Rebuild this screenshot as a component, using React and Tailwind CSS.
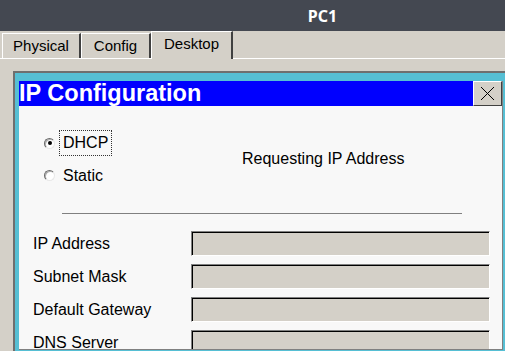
import React from "react";

function Radio({ checked }) {
  return (
    <div className="w-[11px] h-[11px] rounded-full border border-t-[#6a6a6a] border-l-[#6a6a6a] border-b-[#e8e8e8] border-r-[#e8e8e8] bg-white shadow-[inset_1px_1px_0_#b0b0b0] flex items-center justify-center">
      {checked && <div className="w-[4px] h-[4px] rounded-full bg-black" />}
    </div>
  );
}

function Field({ label }) {
  return (
    <div className="flex items-center h-[25px]">
      <div className="w-[172px] pl-[14px] text-[16px] text-black leading-none">{label}</div>
      <div className="w-[299px] h-[25px] border-t border-l border-t-[#808080] border-l-[#808080] border-b border-r border-b-white border-r-white">
        <div className="w-full h-full border-t border-l border-black bg-[#d4d0c8]" />
      </div>
    </div>
  );
}

export default function App() {
  return (
    <div
      className="w-[505px] h-[351px] overflow-hidden bg-[#d4d0c8] flex flex-col"
      style={{ fontFamily: '"Liberation Sans", Arial, sans-serif' }}
    >
      <div
        className="h-[31px] shrink-0 bg-[#444851] flex items-center justify-center pl-[140px] text-white font-bold text-[16px]"
        style={{ fontFamily: '"Noto Sans", sans-serif' }}
      >
        PC1
      </div>
      <div className="h-[27px] shrink-0 flex items-end pl-[2px] relative z-10">
        <div className="w-[79px] h-[25px] border-t border-l border-white border-r-2 border-r-[#404040] flex items-center justify-center text-[15px] text-black">
          Physical
        </div>
        <div className="w-[70px] h-[25px] border-t border-l border-white border-r-2 border-r-[#404040] flex items-center justify-center text-[15px] text-black">
          Config
        </div>
        <div className="w-[82px] h-[28px] -mb-px bg-[#d4d0c8] border-t border-l border-white border-r-2 border-r-[#404040] flex items-center justify-center pb-[3px] text-[15px] text-black">
          Desktop
        </div>
      </div>
      <div className="flex-1 min-h-0 border-t border-white pl-[13px] pt-[12px] flex flex-col">
        <div className="flex-1 min-h-0 border-t-2 border-l-2 border-[#6f6f6f] bg-[#56bfd4] pl-[4px] pt-[8px] pr-[2px] pb-[1px] flex flex-col">
          <div className="flex-1 min-h-0 bg-[#f8f8f8] border-r border-b border-[#808080] overflow-hidden flex flex-col">
            <div className="h-[25px] shrink-0 bg-[#0000ff] flex items-center justify-between">
              <div className="text-white text-[23.5px] font-bold leading-none">
                IP Configuration
              </div>
              <div className="w-[29px] h-[25px] bg-[#d4d0c8] border-t border-l border-white border-r border-b border-r-[#404040] border-b-[#404040] flex items-center justify-center">
                <svg width="15" height="15" viewBox="0 0 15 15">
                  <path d="M1 1 L14 14 M14 1 L1 14" stroke="#000" strokeWidth="1" fill="none" />
                </svg>
              </div>
            </div>
            <div className="flex pt-[24px] h-[82px] shrink-0">
              <div className="flex flex-col gap-[7px] pl-[25px] w-[223px]">
                <div className="flex items-center h-[26px]">
                  <Radio checked />
                  <div className="ml-[4px] h-[26px] px-[3px] border border-dotted border-[#333] flex items-center text-[16px] text-black">
                    DHCP
                  </div>
                </div>
                <div className="flex items-center h-[25px]">
                  <Radio />
                  <div className="ml-[8px] text-[16px] text-black">Static</div>
                </div>
              </div>
              <div className="flex items-center h-[58px] text-[16px] text-black">
                Requesting IP Address
              </div>
            </div>
            <div className="ml-[43px] mt-[25px] w-[400px] h-px bg-[#808080] shrink-0" />
            <div className="mt-[17px] flex flex-col gap-[8px]">
              <Field label="IP Address" />
              <Field label="Subnet Mask" />
              <Field label="Default Gateway" />
              <Field label="DNS Server" />
            </div>
          </div>
        </div>
      </div>
    </div>
  );
}
